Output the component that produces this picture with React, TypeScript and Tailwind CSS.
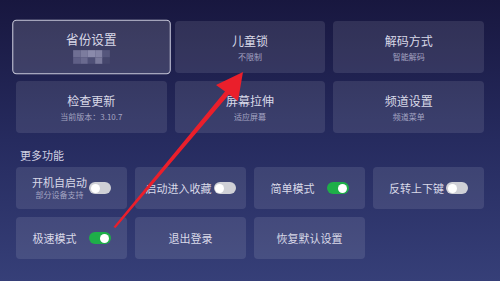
import React from 'react';

const font = { fontFamily: '"Noto Sans CJK SC", "Noto Sans", sans-serif' };

function Toggle({ on }: { on: boolean }) {
    return (
        <div className={`w-[22px] h-[12px] rounded-full flex items-center px-[1.5px] shrink-0 ${on ? 'bg-[#1eae48] justify-end' : 'bg-[#cfd0d6] justify-start'}`}>
            <div className="w-[9px] h-[9px] rounded-full bg-white" />
        </div>
    );
}

// mosaic that hides the province name
function Mosaic() {
    const cells = [
        '#6f6f93', '#7c7c9e', '#8a8aab', '#8383a5', '#55567c',
        '#5f5f86', '#6a6a8f', '#4f5077', '#7a7a9c', '#45466c',
    ];
    return (
        <div className="grid grid-cols-5 grid-rows-2 w-[35px] h-[13px] mt-[4px]">
            {cells.map((c, i) => (
                <div key={i} style={{ backgroundColor: c }} />
            ))}
        </div>
    );
}

function BigCard({ title, sub, focused, children }: { title: string; sub?: string; focused?: boolean; children?: React.ReactNode }) {
    return (
        <div className={`h-[52px] rounded-[4px] flex flex-col items-center justify-center ${focused ? 'scale-[1.05] bg-white/[0.14] border border-[#c9c9da]' : 'bg-white/10'}`}>
            <div className="text-[12px] leading-[15px] text-[#d9d9e8]">{title}</div>
            {sub && <div className="text-[8px] leading-[11px] mt-[3px] text-[#a4a4c2]">{sub}</div>}
            {children}
        </div>
    );
}

function SwitchCard({ label, sub, on }: { label: string; sub?: string; on: boolean }) {
    return (
        <div className="h-[42px] rounded-[4px] bg-white/10 flex items-center justify-center">
            <div className="min-w-[54px] flex flex-col items-center">
                <div className="text-[11px] leading-[14px] text-[#d9d9e8] self-start whitespace-nowrap">{label}</div>
                {sub && <div className="text-[8px] leading-[12px] text-[#a4a4c2] whitespace-nowrap">{sub}</div>}
            </div>
            <div className="ml-[2px]">
                <Toggle on={on} />
            </div>
        </div>
    );
}

function PlainCard({ label }: { label: string }) {
    return (
        <div className="h-[42px] rounded-[4px] bg-white/10 flex items-center justify-center">
            <div className="text-[11px] leading-[14px] text-[#d9d9e8]">{label}</div>
        </div>
    );
}

export default function App() {
    return (
        <div style={font} className="relative w-[500px] h-[281px] overflow-hidden bg-gradient-to-b from-[#18173f] via-[#262b5f] to-[#363f78]">
            <div className="px-[16px] pt-[21px]">
                {/* Main settings */}
                <div className="grid grid-cols-3 gap-[8px]">
                    <BigCard title="省份设置" focused>
                        <Mosaic />
                    </BigCard>
                    <BigCard title="儿童锁" sub="不限制" />
                    <BigCard title="解码方式" sub="智能解码" />
                    <BigCard title="检查更新" sub="当前版本：3.10.7" />
                    <BigCard title="屏幕拉伸" sub="适应屏幕" />
                    <BigCard title="频道设置" sub="频道菜单" />
                </div>

                {/* More */}
                <div className="text-[11px] leading-[14px] text-[#cfd0e2] pl-[4px] mt-[15px] mb-[5px]">更多功能</div>
                <div className="grid grid-cols-4 gap-[8px]">
                    <SwitchCard label="开机自启动" sub="部分设备支持" on={false} />
                    <SwitchCard label="启动进入收藏" on={false} />
                    <SwitchCard label="简单模式" on />
                    <SwitchCard label="反转上下键" on={false} />
                    <SwitchCard label="极速模式" on />
                    <PlainCard label="退出登录" />
                    <PlainCard label="恢复默认设置" />
                </div>
            </div>

            {/* annotation arrow */}
            <svg className="absolute inset-0 pointer-events-none" width="500" height="281" viewBox="0 0 500 281">
                <polygon points="113.5,227 225,91.4 216,85 243,72 238,101 229,94.6 115.5,228" fill="#ea1f2b" />
            </svg>
        </div>
    );
}
